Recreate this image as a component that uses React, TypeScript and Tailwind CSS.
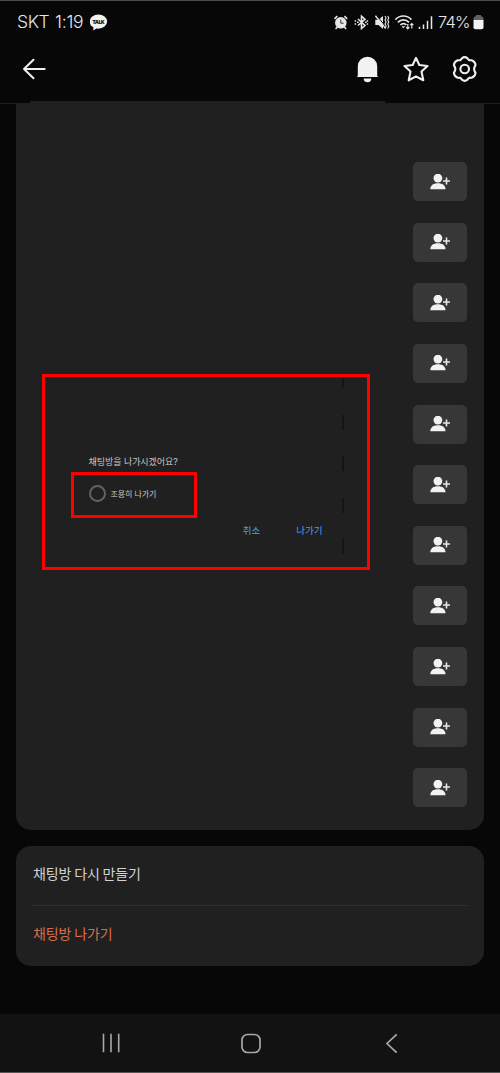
import type { ReactNode } from "react";

const MEMBER_ROWS = 11;

function StatusBar() {
  return (
    <div className="flex h-[42px] items-center justify-between pl-[17px] pr-[16px] text-[#e6e6e6]">
      <div className="flex items-center">
        <span className="w-[38px] text-[17.5px] font-light leading-none tracking-[-0.4px]">SKT</span>
        <span className="w-[35px] pb-px text-[17.5px] font-light leading-none tracking-[-0.2px]">1:19</span>
        <svg width="18" height="17" viewBox="0 0 18 17">
          <ellipse cx="8.4" cy="7.6" rx="8.7" ry="7.1" fill="#f2f2f2" />
          <path d="M3.5 11.5 3.2 16.5 8 13.6Z" fill="#f2f2f2" />
          <text
            x="8.5"
            y="9.6"
            textAnchor="middle"
            textLength="12.6"
            fontSize="5.2"
            fontWeight="900"
            fill="#151515"
          >
            TALK
          </text>
        </svg>
      </div>
      <div className="flex items-center">
        <svg width="105" height="16" viewBox="333 14 105 16" fill="none" stroke="#e6e6e6">
          {/* alarm */}
          <circle cx="340.8" cy="22.8" r="5.8" fill="#e6e6e6" stroke="none" />
          <path d="M334.5 18.8 337.3 16.2M344.4 16.2 347.2 18.8M337.3 27 335.6 29M344.4 27 346.1 29" strokeWidth="1.6" />
          <path d="M340.8 19.6v3.6h2.8" stroke="#333" strokeWidth="1" />
          {/* bluetooth */}
          <path d="m358 19 7 6.5-3.5 3V16.2l3.5 3-7 6.3" strokeWidth="1.6" />
          <path d="M355.4 20.3v1.4M355.4 23.3v1.4M367.4 20.3v1.4M367.4 23.3v1.4M357 22.3h1.6M365 22.3h1.6" strokeWidth="1.5" />
          {/* vibrate / mute */}
          <path d="M375.3 19.8h3.2l4.5-3.9v13.2l-4.5-4h-3.2Z" fill="#e6e6e6" stroke="none" />
          <path d="m376.5 15.2 10 12.6" stroke="#080808" strokeWidth="1" />
          <path d="m375.4 15.7 10.2 12.7" strokeWidth="1.4" />
          <path d="m385 16 1.1 2-1.1 2 1.1 2-1.1 2 1.1 2-1.1 2.5M387.7 16l1.1 2-1.1 2 1.1 2-1.1 2 1.1 2-1.1 2.5" strokeWidth="1.1" />
          {/* wifi */}
          <path d="M395.4 19.6c4.4-4.8 11.6-4.8 16 0M397.9 22.3c3.1-3.2 8-3.2 11.1 0M400.4 25c1.8-1.9 4.4-1.9 6 0" strokeWidth="1.7" />
          <path d="m401.9 26.3 1.6 1.6 1.2-1.6" fill="#e6e6e6" strokeWidth=".8" />
          <path d="M407.8 24v4.8m-1.6-1.6 1.6 1.6 1.6-1.6M411.8 28.5v-5m-1.6 1.6 1.6-1.6 1.6 1.6" strokeWidth="1.2" />
          {/* signal */}
          <path d="M419.5 29v-2.2M423.5 29v-4.5M427.5 29v-8.3M431.5 29V16.2" strokeWidth="1.5" />
        </svg>
        <span className="w-[35px] text-[16.5px] font-light leading-none tracking-[-0.8px]">74%</span>
        <svg width="11" height="16" viewBox="0 0 11 16">
          <path d="M3 1h5v1.5h.8A1.7 1.7 0 0 1 10.5 4v2H.5V4a1.7 1.7 0 0 1 1.7-1.5H3Z" fill="#626262" />
          <path d="M.5 6h10v7.2a2 2 0 0 1-2 2h-6a2 2 0 0 1-2-2Z" fill="#f2f2f2" />
        </svg>
      </div>
    </div>
  );
}

function TitleBar() {
  return (
    <div className="flex h-[52px] items-center justify-between pl-[22px] pr-[22px]">
      <svg width="25" height="24" viewBox="0 0 25 24" fill="none" stroke="#f0f0f0" strokeWidth="2" strokeLinecap="round" strokeLinejoin="round">
        <path d="M22.7 12H2M11.5 2.7 2 12l9.5 9.3" />
      </svg>
      <div className="flex items-center gap-[22px]">
        <svg width="24" height="28" viewBox="0.5 0 24 28" fill="#f2f2f2">
          <path d="M2.3 20.7V11.4a9.7 9.7 0 0 1 19.4 0v9.3l.9 1.3H1.4Z" />
          <path d="M8.2 23.5h7.6a3.8 3.8 0 0 1-7.6 0Z" />
        </svg>
        <svg width="28" height="28" viewBox="0 0 28 28" fill="none" stroke="#f0f0f0" strokeWidth="2.1" strokeLinejoin="round">
          <path d="m14 2.9 3.3 7.1 8.2 1-6 5.6 1.8 8.7-7.3-3.9-7.3 3.9 1.8-8.7-6-5.6 8.2-1Z" />
        </svg>
        <svg width="26" height="28" viewBox="0.3 0 26 28" fill="none" stroke="#f0f0f0" strokeWidth="2.1" strokeLinejoin="round">
          <path d="M10.2 3.3Q13 1.1 15.8 3.3L17.3 5.1 20 5.3Q23.5 6.6 23.8 10L22.7 12.5Q22.1 14 22.7 15.5L23.8 18Q23.5 21.4 20 22.7L17.3 22.9 15.8 24.7Q13 26.9 10.2 24.7L8.7 22.9 6 22.7Q2.5 21.4 2.2 18L3.3 15.5Q3.9 14 3.3 12.5L2.2 10Q2.5 6.6 6 5.3L8.7 5.1Z" />
          <circle cx="13" cy="14" r="4.3" />
        </svg>
      </div>
    </div>
  );
}

function AddFriendButton() {
  return (
    <button className="flex h-[39px] w-[54px] items-center justify-center rounded-[5px] bg-[#373737]">
      <svg width="20" height="16" viewBox="0 0.5 20 16" fill="#f2f2f2">
        <circle cx="7.9" cy="4.6" r="4.4" />
        <path d="M.3 15.7c0-3.9 3-6 7.6-6s7.6 2.1 7.6 6Z" />
        <path d="M16.5 4v7M13 7.5h7" stroke="#e8e8e8" strokeWidth="1.6" />
      </svg>
    </button>
  );
}

function LeaveDialog() {
  return (
    <div className="relative mt-[270px] ml-[26px] flex h-[196px] w-[328px] flex-col border-[3px] border-[#fe0000]">
      <div className="absolute right-[23px] top-px flex h-[176px] w-[2px] flex-col justify-between">
        <span className="h-[10px] bg-[#151515]" />
        <span className="h-[15px] bg-[#151515]" />
        <span className="h-[15px] bg-[#151515]" />
        <span className="h-[15px] bg-[#151515]" />
        <span className="h-[15px] bg-[#151515]" />
      </div>
      <p className="mt-[77px] ml-[43.5px] h-[18px] whitespace-nowrap text-[9px] leading-[15px] tracking-[-0.05px] text-[#c8c8c8]">
        채팅방을 나가시겠어요?
      </p>
      <label className="ml-[26px] flex h-[46px] w-[126px] items-center border-[3px] border-[#fe0000] pb-[3px] pl-[14.5px]">
        <span className="h-[17px] w-[17px] rounded-full border-2 border-[#626262]" />
        <span className="ml-[5px] whitespace-nowrap text-[8px] leading-none tracking-[-0.1px] text-[#c8c8c8]">조용히 나가기</span>
      </label>
      <div className="mt-[5px] flex justify-end gap-[36px] pr-[44.5px] text-[9.5px] leading-[15px] text-[#4b9fe4]">
        <button>취소</button>
        <button>나가기</button>
      </div>
    </div>
  );
}

function MenuRow({ children }: { children: ReactNode }) {
  return <div className="flex h-[59px] items-center pb-[4px] text-[14px] tracking-[-0.15px]">{children}</div>;
}

function NavBar() {
  return (
    <div className="flex h-[59px] items-center justify-between border-b border-[#555] bg-[#121212] pl-[101px] pr-[100px]">
      <svg width="20" height="20" viewBox="0 0 20 20" stroke="#a8a8a8" strokeWidth="1.6">
        <path d="M2.5.7v18.6M10 .7v18.6M17.7.7v18.6" />
      </svg>
      <svg width="20" height="20" viewBox="1 -0.5 20 20" fill="none" stroke="#a8a8a8" strokeWidth="1.7" overflow="visible">
        <rect x="1" y="1" width="18" height="18" rx="5.5" />
      </svg>
      <svg width="17" height="20" viewBox="0 -0.5 17 20" fill="none" stroke="#a8a8a8" strokeWidth="1.7">
        <path d="M13.7.8 4 10l9.7 9.2" />
      </svg>
    </div>
  );
}

export default function App() {
  return (
    <div className="flex h-[1073px] w-[500px] flex-col overflow-hidden bg-[#070707] font-['Inter','Noto_Sans_CJK_KR',sans-serif]">
      <header className="relative h-[104px] shrink-0 border-t border-b border-t-[#4a4a4a] border-b-[#1e1e1e]">
        <StatusBar />
        <TitleBar />
        <span className="absolute -bottom-px left-[30px] h-[3px] w-[355px] bg-[#202020]" />
      </header>

      <main className="flex flex-1 flex-col gap-[16px] px-[16px]">
        <section className="flex h-[726px] justify-between rounded-b-[15px] bg-[#202020]">
          <LeaveDialog />
          <div className="flex h-[703.5px] flex-col justify-between pr-[17px] pt-[58px]">
            {Array.from({ length: MEMBER_ROWS }, (_, i) => (
              <AddFriendButton key={i} />
            ))}
          </div>
        </section>

        <section className="h-[120px] rounded-[15px] bg-[#202020] pl-[17px] pr-[16px] font-['Noto_Sans_CJK_KR',sans-serif]">
          <div className="border-b border-[#303030] text-[#d2d2d2]">
            <MenuRow>채팅방 다시 만들기</MenuRow>
          </div>
          <div className="text-[#d66f49]">
            <MenuRow>채팅방 나가기</MenuRow>
          </div>
        </section>
      </main>

      <NavBar />
    </div>
  );
}
